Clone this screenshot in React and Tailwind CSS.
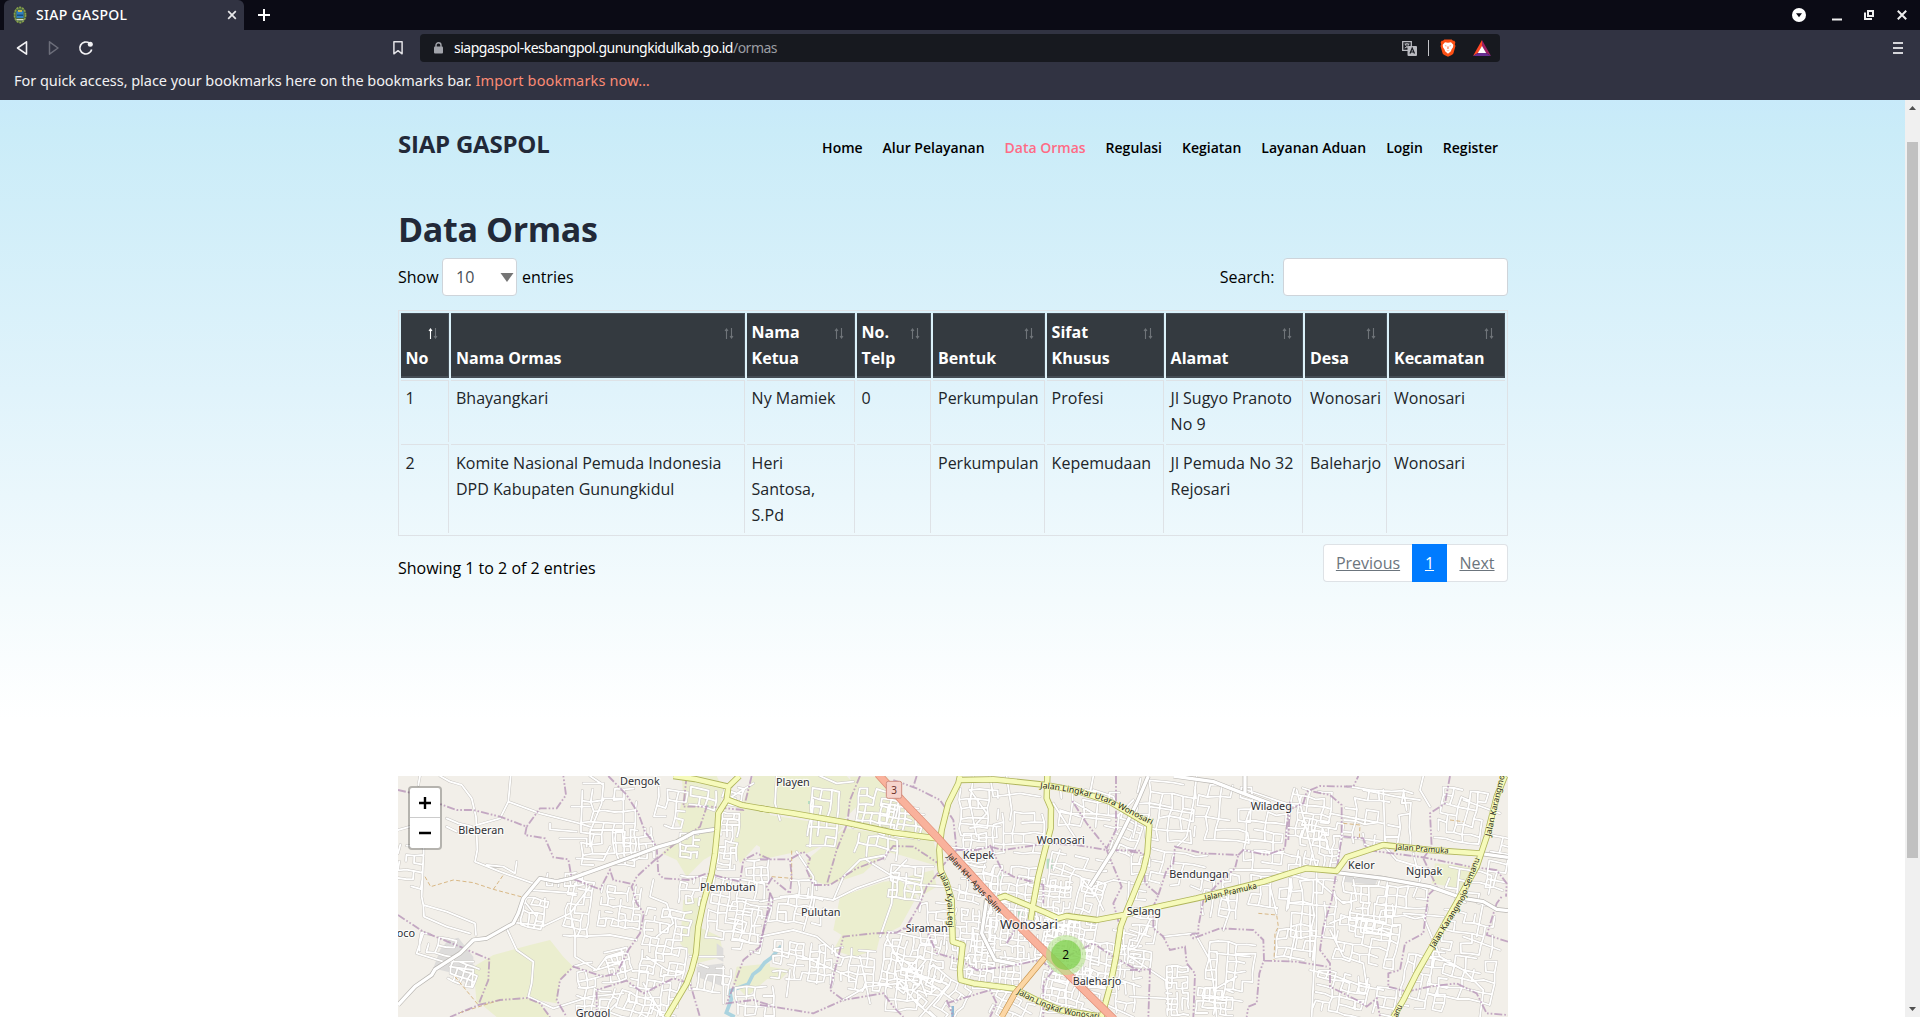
import React from 'react';

const NAV = ['Home', 'Alur Pelayanan', 'Data Ormas', 'Regulasi', 'Kegiatan', 'Layanan Aduan', 'Login', 'Register'];

const COLUMNS = [
  { label: 'No', width: 48 },
  { label: 'Nama Ormas', width: 294 },
  { label: 'Nama Ketua', width: 108 },
  { label: 'No. Telp', width: 74 },
  { label: 'Bentuk', width: 112 },
  { label: 'Sifat Khusus', width: 117 },
  { label: 'Alamat', width: 137 },
  { label: 'Desa', width: 82 },
  { label: 'Kecamatan', width: 116 },
];

const ROWS = [
  ['1', 'Bhayangkari', 'Ny Mamiek', '0', 'Perkumpulan', 'Profesi', 'Jl Sugyo Pranoto No 9', 'Wonosari', 'Wonosari'],
  ['2', 'Komite Nasional Pemuda Indonesia DPD Kabupaten Gunungkidul', 'Heri Santosa, S.Pd', '', 'Perkumpulan', 'Kepemudaan', 'Jl Pemuda No 32 Rejosari', 'Baleharjo', 'Wonosari'],
];

const CELL_PAD = ['pl-[4.600px]', 'pl-[5px]', 'pl-[4.600px]', 'pl-[4.600px]', 'pl-[5px]', 'pl-[4.600px]', 'pl-[4.600px]', 'pl-[5px]', 'pl-[5px]'];

/* ---------- browser chrome ---------- */

function Favicon() {
  return (
    <svg width="14" height="18" viewBox="0 0 14 18">
      <ellipse cx="7" cy="9" rx="6" ry="8" fill="#4d6b45" />
      <ellipse cx="7" cy="9" rx="5.6" ry="7.6" fill="none" stroke="#8aa04a" strokeWidth="1.6" strokeDasharray="2 1" />
      <rect x="3.5" y="5" width="7" height="7" fill="#2f7fc1" />
      <rect x="4" y="8.5" width="6" height="1.5" fill="#1b4c7d" />
      <path d="M5 4h4v2H5z" fill="#c9b44b" />
      <path d="M3.5 13h7v1.3h-7z" fill="#d6d9c4" />
    </svg>
  );
}

function TabStrip() {
  return (
    <div className="flex h-[30px] items-center bg-[#0b0b15] pl-1 text-white">
      <div className="flex h-[30px] w-[240px] items-center rounded-t-md bg-[#313342] pl-[9px] pr-[7px]">
        <Favicon />
        <span className="ml-[9px] pb-[2px] text-[14px] font-medium tracking-[0.3px]">SIAP GASPOL</span>
        <svg className="ml-auto" width="10" height="10" viewBox="0 0 10 10" stroke="#e8e8ea" strokeWidth="1.7">
          <path d="M1.2 1.2l7.6 7.6M8.8 1.2L1.2 8.8" />
        </svg>
      </div>
      <svg className="ml-[14px]" width="12" height="12" viewBox="0 0 12 12" stroke="#fff" strokeWidth="2">
        <path d="M6 0v12M0 6h12" />
      </svg>
      <div className="ml-auto flex items-center pr-[13px]">
        <svg width="14" height="14" viewBox="0 0 14 14">
          <circle cx="7" cy="7" r="7" fill="#fff" />
          <path d="M4 5.3h6L7 9.2z" fill="#0b0b15" />
        </svg>
        <svg className="ml-[26px]" width="10" height="12" viewBox="0 0 10 12">
          <rect y="9.5" width="10" height="2" fill="#eee" />
        </svg>
        <svg className="ml-[22px]" width="10" height="10" viewBox="0 0 10 10" fill="none" stroke="#eee" strokeWidth="2">
          <path d="M4 1h5v5H4z" />
          <path d="M1 2.5V9h7" />
        </svg>
        <svg className="ml-[23px]" width="10" height="10" viewBox="0 0 10 10" stroke="#eee" strokeWidth="2">
          <path d="M.8 .8l8.4 8.4M9.2 .8L.8 9.2" />
        </svg>
      </div>
    </div>
  );
}

function BraveIcon() {
  return (
    <svg width="16" height="18" viewBox="0 0 16 18">
      <path d="M4.3.4h7.4l1.3 1.4 1.4-.1 1 2-.6 1.6.7 1.6-2 7.2c-.3 1-1 1.500-1.800 2L8 17.800l-3.700-1.700c-.8-.5-1.500-1-1.800-2L.5 6.900l.7-1.600-.6-1.600 1-2 1.400.1z" fill="#fb4f14" />
      <path d="M5 3.200L8 3.700l3-.5 2.300 2.600-.3 2.400-1.500 2.400-.6 1.600L8 14.800l-2.900-2.600-.6-1.600L3 8.200l-.3-2.400z" fill="#fff" />
      <path d="M4.600 6.600l2 .2-.5.700zM11.400 6.600l-2 .2.5.7zM7.700 7.300h.6l.3 2.100L8 9.900l-.6-.5zM6.300 11.200L8 11.700l1.700-.5L8 12.300z" fill="#fb4f14" />
    </svg>
  );
}

function Toolbar() {
  return (
    <div className="flex h-9 items-center bg-[#313342]">
      <svg className="ml-4" width="62" height="16" viewBox="0 0 62 16" fill="none" strokeLinejoin="round">
        <path d="M10.500 1.800v12.400L1.500 8z" stroke="#f2f2f4" strokeWidth="1.600" />
        <path d="M33.500 1.800v12.400l8.500-6.200z" stroke="#6c6e7a" strokeWidth="1.500" />
      </svg>
      <svg width="16" height="16" viewBox="0 0 16 16" fill="none">
        <path d="M11.500 3.200A6 6 0 1 0 13.700 9.500" stroke="#f2f2f4" strokeWidth="1.700" />
        <circle cx="12.300" cy="4.300" r="2.500" fill="#f2f2f4" />
      </svg>
      <svg className="ml-[299px]" width="10" height="14" viewBox="0 0 10 14" fill="none" stroke="#e2e2e6" strokeWidth="1.500">
        <path d="M.9.8h8.200v12L5 9.700.9 12.800z" strokeLinejoin="round" />
      </svg>
      <div className="ml-[17px] flex h-7 w-[1080px] items-center rounded bg-[#17191f] pl-[14px] pr-[9px]">
        <svg width="9" height="12" viewBox="0 0 9 12">
          <rect y="4.500" width="9" height="7" rx="1" fill="#a2a4ab" />
          <path d="M2 5V3.200a2.500 2.500 0 0 1 5 0V5" fill="none" stroke="#a2a4ab" strokeWidth="1.400" />
        </svg>
        <span className="ml-[11px] pb-[2px] text-[14px] tracking-[-0.5px] text-white">
          siapgaspol-kesbangpol.gunungkidulkab.go.id<span className="text-[#9b9da3]">/ormas</span>
        </span>
        <svg className="ml-auto" width="15" height="15" viewBox="0 0 15 15">
          <path d="M.7.700h8.600v8.600H.7z" fill="none" stroke="#b9bac0" strokeWidth="1.300" />
          <path d="M2.500 3h5M5 2v1M3.500 3c0 2 2 3.500 3.500 4M6.500 3c0 2-2 3.500-3.800 4" stroke="#b9bac0" fill="none" />
          <rect x="5.500" y="5" width="9.500" height="10" rx="1" fill="#b9bac0" />
          <path d="M8 12.500L10.200 7l2.300 5.500M8.800 11h3" stroke="#17191f" strokeWidth="1.200" fill="none" />
        </svg>
        <div className="ml-[11px] h-4 w-px bg-[#c4c5c9]" />
        <div className="ml-[11px]"><BraveIcon /></div>
        <svg className="ml-[17px]" width="18" height="16" viewBox="0 0 18 16">
          <path d="M9 0L0 16l5-3 4-6.500z" fill="#ff4724" />
          <path d="M9 0l9 16-5-3-4-6.500z" fill="#9e1f63" />
          <path d="M0 16h18l-5-3H5z" fill="#662d91" />
          <path d="M9 6l4.200 7H4.800z" fill="#fff" />
        </svg>
      </div>
      <svg className="ml-auto mr-[17px]" width="10" height="13" viewBox="0 0 10 13" fill="#d4d5d9">
        <path d="M0 0h10v2H0zM0 5h10v2H0zM0 10h10v2H0z" />
      </svg>
    </div>
  );
}

function BookmarksBar() {
  return (
    <div className="flex h-[34px] items-start bg-[#313342] pl-[14px] pt-[4px] text-[14.500px] leading-[20px] text-[#f1f1f3]">
      <span className="whitespace-pre tracking-[-0.04px]">For quick access, place your bookmarks here on the bookmarks bar. </span>
      <span className="tracking-[0.15px] text-[#fb8a74]">Import bookmarks now…</span>
    </div>
  );
}

function Scrollbar() {
  return (
    <div className="flex w-[15px] shrink-0 flex-col items-center bg-[#f0f0f0]">
      <svg className="mt-1.5" width="7" height="4" viewBox="0 0 7 4"><path d="M0 4h7L3.500 0z" fill="#505050" /></svg>
      <div className="mt-8 h-[716px] w-[11px] bg-[#c1c1c1]" />
      <svg className="mb-1.5 mt-auto" width="7" height="4" viewBox="0 0 7 4"><path d="M0 0h7L3.500 4z" fill="#505050" /></svg>
    </div>
  );
}

/* ---------- data table ---------- */

function SortArrows({ active }) {
  return (
    <svg className="absolute right-[10px] top-[14px]" width="10" height="11" viewBox="0 0 10 11" fill="none">
      <path d="M2.500 11V1M1 3L2.500 1 4 3" stroke={active ? '#ffffff' : '#6f7479'} strokeWidth="1.100" />
      <path d="M7.500 0v10M6 8l1.500 2L9 8" stroke="#6f7479" strokeWidth="1.100" />
    </svg>
  );
}

function DataTable() {
  return (
    <table className="mt-[14px] w-[1110px] table-fixed border-separate border-spacing-[2px] border border-[#dee2e6] text-[16px] leading-[26px] text-[#212529]">
      <colgroup>
        {COLUMNS.map((c) => <col key={c.label} style={{ width: c.width }} />)}
      </colgroup>
      <thead>
        <tr className="h-[65px]">
          {COLUMNS.map((c, i) => (
            <th key={c.label} className={'relative border-b-2 border-r border-t border-[#454d55] bg-[#343a40] pb-[5px] pr-[30px] text-left align-bottom font-bold text-white ' + CELL_PAD[i]}>
              <span className="whitespace-pre">{c.label === 'Nama Ketua' || c.label === 'No. Telp' || c.label === 'Sifat Khusus' ? c.label.replace(/ (?=\w+$)/, '\n') : c.label}</span>
              <SortArrows active={i === 0} />
            </th>
          ))}
        </tr>
      </thead>
      <tbody>
        {ROWS.map((row, r) => (
          <tr key={row[0]} className={r === 0 ? 'h-[62px]' : 'h-[89px]'}>
            {row.map((cell, i) => (
              <td key={i} className={'border-t border-[#dee2e6] pb-0 align-top ' + CELL_PAD[i] + (i < 8 ? ' border-r' : '') + (i === 2 ? ' pr-[6px]' : ' pr-[4px]') + (r === 0 ? ' pt-[4px]' : ' pt-[5px]')}>{cell}</td>
            ))}
          </tr>
        ))}
      </tbody>
    </table>
  );
}

/* ---------- map ---------- */

function makeRandom(seed) {
  let s = seed;
  return () => {
    s = (s * 16807) % 2147483647;
    return s / 2147483647;
  };
}

/* Irregular village street grid: [x, y, width, height, angle, spacing] */
function streetGrid([x, y, w, h, angle, step], seed) {
  const rnd = makeRandom(seed * 7919 + 13);
  const a = (angle * Math.PI) / 180;
  const cols = Math.max(1, Math.round(w / step));
  const rows = Math.max(1, Math.round(h / step));
  const pts = [];
  for (let r = 0; r <= rows; r++) {
    pts.push([]);
    for (let c = 0; c <= cols; c++) {
      const dx = c * step - w / 2 + (rnd() - 0.5) * step * 0.3;
      const dy = r * step - h / 2 + (rnd() - 0.5) * step * 0.3;
      pts[r].push([Math.round(x + w / 2 + dx * Math.cos(a) - dy * Math.sin(a)), Math.round(y + h / 2 + dx * Math.sin(a) + dy * Math.cos(a))]);
    }
  }
  let d = '';
  for (let r = 0; r <= rows; r++) {
    for (let c = 0; c <= cols; c++) {
      if (c < cols && rnd() < 0.7) d += `M${pts[r][c]}L${pts[r][c + 1]}`;
      if (r < rows && rnd() < 0.7) d += `M${pts[r][c]}L${pts[r + 1][c]}`;
    }
  }
  return d;
}

const WEST = {
  fields: [
    'M250 590L310 555 420 525 480 510 520 560 550 590 510 630 500 700 440 690 400 682 300 705 260 700z',
    'M270 700L400 684 440 690 480 741H320z',
    'M875 18H980L1000 60 985 130 975 250 940 270 890 320 860 270 815 250 880 190 860 150 880 80z',
    'M1050 120L1090 18H1140V250L1100 225 1050 280 1030 230z',
    'M880 390L940 380 925 470 990 500 1000 560 920 580 870 520z',
    'M1040 590L1140 580V620L1070 680 1030 640z',
  ],
  built: ['M175 510L205 503 250 560 250 655 190 610 130 595 150 540z', 'M920 590L1000 580V650L920 620z', 'M980 520l20 15v40l-20-10z'],
  boundary: [
    'M24 60L60 68 130 95 200 120 250 120 330 140 410 170 450 115 500 115 528 75 520 18',
    'M410 170L405 195 465 205 490 262 535 268 545 325 630 358 660 300 670 330 740 345',
    'M655 18L710 75 745 130 765 185 800 230 805 310 820 325 900 330 950 310 1050 335 1060 270 1100 250 1140 268',
    'M800 265L740 320 725 350 740 400 762 430 750 490 715 540 680 610 640 620 550 590 510 630 500 690 530 741',
    'M24 435L100 485 210 530 298 568 295 630 265 705 180 741M265 705L330 690 410 684 450 700 480 741',
    'M620 741V660L710 632 760 670 800 650 850 625 900 640 930 741',
    'M1140 370L1130 440 1110 530 1060 570 1030 650 1010 700 1090 690 1140 705M800 268L850 225 930 170 950 110 880 110 890 18M1085 18L1060 120 960 110',
  ],
  tracks: ['M105 320L122 350 190 330 250 338 310 358 400 382M310 358L340 315', 'M195 620L265 705M210 728L330 690'],
  lanes: [
    'M150 18L180 35 215 45 245 85 258 140 262 240 255 275 330 305 430 340',
    'M362 18L355 95 330 145 260 165M355 95L450 130 560 158 600 170',
    'M100 260L95 380 100 405 170 425 255 460 258 495M100 405L102 440 170 470 240 490',
    'M290 285L340 290 375 310 380 275M170 145L205 160 245 170M170 170L200 185',
    'M350 475L380 540 430 575 425 640 415 680 490 715 600 680 700 670',
    'M375 458L460 468 540 430 600 350M555 340L540 420 555 490 555 560 620 600',
    'M600 18L640 45 635 100 600 185 600 230M640 85H700V180H600M580 40H640M545 110H600M480 160V178L560 185M510 205H590V230M560 265L640 270 660 230',
    'M400 390L440 440M465 385L460 470M420 360L560 370M560 500L660 495 740 510',
    'M620 600L650 560 700 545M770 560L830 600 880 610M100 490L80 550 160 575 250 575M180 590L250 600 245 650M60 170L24 180M90 18L85 45',
    'M790 330L780 380 830 400 850 460 800 500M760 640L820 741M680 700L640 741M1000 590V700M900 560H1000M1010 90L1090 40',
  ],
  grids: [
    [24, 230, 70, 130, 5, 24], [575, 60, 150, 210, 0, 32], [680, 180, 110, 90, -5, 22], [400, 385, 70, 80, 12, 22],
    [530, 330, 60, 160, 8, 24], [630, 350, 120, 120, 5, 20], [560, 570, 140, 60, -12, 24], [650, 540, 60, 60, -12, 17],
    [800, 60, 90, 110, 8, 28], [870, 190, 50, 80, 4, 18], [1000, 50, 60, 60, 15, 18], [990, 130, 50, 170, 5, 17],
    [760, 420, 140, 200, 8, 22], [870, 320, 70, 70, 5, 20], [960, 330, 160, 170, 8, 26], [1070, 270, 70, 70, 0, 22],
    [720, 610, 150, 120, 5, 24], [560, 660, 100, 80, 5, 24], [660, 680, 170, 60, 18, 24], [900, 590, 110, 80, 8, 24],
    [1010, 400, 110, 150, 12, 28], [470, 310, 100, 30, 0, 18], [90, 500, 110, 60, 12, 26], [1040, 650, 100, 80, 0, 28],
    [180, 580, 70, 60, 20, 20], [900, 60, 90, 50, 10, 26],
  ],
};

const CENTER = {
  fields: [
    'M0 18H260L300 60 290 110 250 150 100 130 0 110z',
    'M0 130L250 170 210 215 140 250 110 245 0 270z',
    'M255 175L520 210 540 290 420 255 380 245 310 310 250 330 200 345 150 330 140 270z',
    'M270 20H380L440 95 520 190 430 190 300 160z',
    'M240 380L370 335 420 330 470 380 420 470 360 500 350 540 280 560 220 540 245 495 220 480z',
    'M30 590L90 600 60 630 0 625V610z',
    'M425 325L520 300 530 350 480 380z',
  ],
  built: [],
  boundary: [
    'M0 268L90 268 95 320 90 370 35 325 20 350 40 390 20 440 5 500 0 520',
    'M95 265L130 245 150 265 140 300 160 345 210 345 290 295 370 265 400 228 460 230 520 270 550 290 500 350 480 400 440 470 410 488 340 490 250 500 235 560 210 660 250 690 370 670 400 710 430 741',
    'M300 18L270 90 262 160 230 240 200 345M400 30L470 55 540 90 580 150 590 240 545 290',
    'M590 240L650 240 690 230 730 240 830 225 860 220 950 225 1040 240 1140 242',
    'M1068 18V180L1040 235 980 160 935 90M690 225L725 300 760 320 850 345 850 400',
    'M1040 240L1085 350 1060 400 1080 470M430 475L500 480 530 550 600 570 650 600 740 590 840 570',
    'M840 570L880 600 850 640 850 741M560 700L690 660 710 700 690 741M0 705L70 715 160 730 250 690M920 560L1000 520 1060 560 1140 605M470 18L460 50M560 690L580 741M740 520L770 470 800 450',
  ],
  tracks: ['M95 330L95 240M35 320L95 325'],
  lanes: [
    'M50 18L45 100 60 150M180 18L230 40 280 35M0 395L110 375 160 380 220 390 290 355 390 320 480 345 560 350 640 375',
    'M160 90L150 230M110 245L160 320 155 390 130 480M220 390L250 320 300 270 380 255M400 320L395 400 360 500M440 270L400 310M320 270L400 320 480 330',
    'M640 18L630 100 650 200M740 18L755 120 750 150M690 18L700 80 780 70 840 80M630 60L680 130 650 160',
    'M1120 90L1070 140 1000 130 940 95M900 120L960 140 1050 150M1000 18L990 70M880 100L930 180 960 225',
    'M600 290L700 380 670 490 710 570 770 582 850 560M430 290L520 290M640 480L650 600M880 290L960 320 1010 380 1030 420',
    'M0 500L100 480 170 500 240 560M40 540L130 560 200 590 290 630M90 600L80 680M180 540L170 640M300 560L330 700M400 550L470 600 500 680M250 690L320 650 420 640 470 700 520 741',
    'M380 500L430 600 560 640M480 741L560 650M960 560L1060 590 1140 560M1050 620L1140 650M1030 700L1120 741M640 590L620 640M870 600L840 741M900 240L880 300M1120 340L1060 330 1000 350',
    'M1060 480L1140 500M1070 540L1140 530M1000 60L1060 80 1068 100M600 160L720 170M560 230L640 240',
  ],
  grids: [
    [150, 60, 90, 160, 5, 28], [290, 60, 120, 130, 8, 24], [360, 110, 130, 90, 8, 18], [600, 60, 100, 150, 0, 28],
    [700, 130, 140, 110, 0, 30], [610, 190, 60, 90, 0, 22], [600, 290, 120, 120, 10, 22], [580, 420, 120, 180, 5, 18],
    [670, 400, 140, 170, 5, 18], [800, 330, 120, 150, 5, 16], [860, 440, 150, 110, 8, 16], [830, 450, 130, 130, 5, 18],
    [950, 330, 80, 120, 15, 24], [30, 380, 160, 80, 5, 26], [40, 520, 170, 110, 5, 22], [220, 540, 160, 130, 5, 24],
    [370, 500, 180, 150, 10, 20], [390, 290, 100, 90, 5, 24], [480, 400, 90, 110, 0, 24], [620, 560, 150, 90, 5, 20],
    [430, 600, 180, 110, 35, 24], [860, 590, 170, 140, 15, 20], [970, 520, 110, 140, 5, 22], [1070, 480, 70, 150, 0, 24],
    [850, 560, 70, 160, 5, 24], [700, 680, 120, 60, 25, 24], [900, 60, 180, 90, 5, 36], [870, 260, 180, 100, 10, 34],
    [1070, 130, 60, 110, 20, 24], [90, 330, 90, 60, 5, 26], [670, 290, 160, 110, 5, 26], [1040, 640, 90, 90, 0, 28],
    [380, 600, 90, 110, 0, 30], [290, 200, 120, 70, 10, 30],
  ],
};

const EAST = {
  fields: ['M915 280L1025 290 1010 365 960 350 905 340z'],
  built: ['M640 315L745 325 735 345 640 335z'],
  boundary: [
    'M0 245L40 250 45 340 85 375 70 410 70 475 100 500 120 540 165 530 170 580 195 610 190 741',
    'M85 375L110 300 130 280 135 230 220 250 325 255 315 295 260 345 220 390 205 470 205 490 180 492 190 505 270 475 370 480 400 510 402 570 388 610 380 700 355 710 350 741',
    'M325 255L340 240 410 255 465 235 475 120 520 100 530 65 570 48 670 50 685 18M550 65L600 75 635 105 635 200 620 300 605 390 580 470 570 540 600 580 600 650 680 690 710 710 740 685 750 741',
    'M402 572L500 575 590 590M640 200L700 205 710 240 880 262 1020 290 1100 300 1130 340 1128 380',
    'M960 18L945 100 900 130 905 230 880 265M880 265L920 350 895 375 880 490 825 520 810 600 775 610 775 650 830 665 900 650 980 640 1040 670 1070 730 1134 735M1134 515L1070 495 1100 400 1115 380',
    'M0 600L60 598 55 741M480 95L475 210',
  ],
  tracks: ['M640 160L690 165 688 205M960 150L1000 155M385 430L440 435 445 470 435 490 432 570'],
  lanes: [
    'M190 130L60 110M200 18L190 100 170 200 140 230M350 60L450 95 500 110M600 130L700 150 760 160M500 60L530 180 560 300',
    'M560 300L560 450 550 640 545 741M640 200L760 215M700 60L800 80 870 90M760 60L765 215M760 225L800 270 900 300M580 180L600 250',
    'M100 500L190 490M195 490L240 570 250 640 260 741M260 550L360 560M320 620L250 660M480 400L620 410M500 470L480 570M540 410L540 560',
    'M600 460L650 440 800 470M600 480L640 560 700 580 710 650M700 480L780 500 770 560M820 430L940 440M880 440L930 560 1000 600M1000 600L1060 660 1050 741M930 560L870 560M940 570L1000 600 1050 610',
    'M1060 395L1040 500M980 390L970 440M1000 500L1110 540M540 600L620 620 700 650 760 660M0 480L60 500M0 560L120 640M60 450L20 530 0 540M0 680L110 685M110 600L115 720',
    'M900 110L870 60 880 18M1000 90L1110 130M850 250L870 330 850 380M560 330L640 400 680 390 670 330M480 330L470 420M280 350L300 420 280 480M420 350L440 430M820 60L830 120M300 300L420 300 540 330',
  ],
  grids: [
    [20, 40, 180, 170, 6, 34], [200, 50, 170, 170, 5, 32], [350, 130, 120, 110, 5, 28], [480, 60, 130, 150, 8, 24],
    [510, 150, 110, 140, 8, 20], [640, 60, 220, 160, 5, 34], [930, 60, 140, 150, 10, 26], [1080, 200, 50, 150, 10, 26],
    [340, 250, 180, 60, 5, 28], [220, 310, 110, 140, 5, 26], [360, 320, 130, 100, 5, 30], [480, 330, 130, 160, 0, 34],
    [660, 400, 130, 90, 5, 18], [620, 450, 180, 130, 10, 26], [640, 320, 120, 90, 5, 26], [770, 350, 120, 90, 5, 30],
    [110, 590, 70, 140, 0, 16], [200, 660, 110, 70, 5, 18], [230, 520, 140, 180, 5, 28], [0, 420, 70, 170, 8, 24],
    [440, 480, 110, 90, 5, 28], [820, 560, 120, 150, 10, 26], [940, 430, 150, 110, 8, 30], [560, 610, 140, 110, 10, 24],
    [900, 560, 200, 140, 10, 32], [680, 650, 120, 80, 10, 28], [0, 260, 60, 130, 5, 26], [950, 300, 120, 110, 10, 32],
    [60, 250, 160, 110, 8, 32],
  ],
};

/* Boxes read left to right across the map viewport */
const REGIONS = [
  { key: 'west', shift: 'translate(-24 -18)', data: WEST },
  { key: 'center', shift: 'translate(1086 -18)', data: CENTER },
  { key: 'east', shift: 'translate(2196 -18)', data: EAST },
];

const TERTIARY = [
  ['translate(-24 -18)', 'M24 705L75 650 125 615 135 598 210 550 250 510 290 505 370 460 385 430 400 385 450 325 500 335 545 325 740 255 800 232 860 215 910 188 975 178'],
  ['translate(1086 -18)', 'M1165 18L1130 100 1060 240 990 350M680 390L665 490 705 570 765 582'],
  ['translate(2196 -18)', 'M130 18L250 35 340 70 420 100M345 18V70M620 308L760 325 900 350 1000 385 1060 395 1100 418 1134 422M1048 250L1134 262'],
];

const SECONDARY = [
  ['translate(-24 -18)', 'M1048 18L1015 50 1010 90 985 130 982 180 975 250 965 310 940 400 925 470 918 550 905 600 890 640 830 741M850 18L915 27 1015 50M1010 88L1055 105 1140 120'],
  ['translate(1086 -18)', 'M0 115L100 130 260 158 400 188 530 205M600 18L595 40 565 100 545 180 538 240 542 300 560 340 575 390 578 515 608 525 600 600 602 630 640 640 760 655 830 690 900 720 1010 738M600 30L700 28 860 45 960 65 1050 95 1168 165 1162 250 1150 300 1105 410 1082 470 1068 560 1050 650 1025 741M862 18L860 85 873 115 872 175 855 240 835 320 820 400 812 450M715 385L735 378 850 425 895 445 920 438 1010 450 1105 432'],
  ['translate(2196 -18)', 'M-8 432L75 412 200 385 400 335 480 310 530 295 620 303 650 262 760 225 900 240 1048 250M1125 18L1100 80 1070 200 1040 290 990 380 900 540 860 610 820 690 790 741'],
];

const PLACES = [
  [181, 174, 'Bleberan'], [666, 27, 'Dengok'], [906, 345, 'Plembutan'], [-4, 482, 'oco'], [533, 723, 'Grogol'],
  [1134, 29, 'Playen'], [1916, 204, 'Wonosari'], [1694, 248, 'Kepek'], [1209, 420, 'Pulutan'], [1523, 469, 'Siraman'],
  [2024, 626, 'Baleharjo'], [2186, 418, 'Selang'], [2558, 101, 'Wiladeg'], [2314, 305, 'Bendungan'], [2850, 279, 'Kelor'], [3024, 296, 'Ngipak'],
];

const STREET_NAMES = [
  ['n1', 'M1646 242L1900 522', 'Jalan KH. Agus Salim', 230],
  ['n2', 'M1622 296Q1644 330 1648 370L1650 470', 'Jalan Kyai Legi', 164],
  ['n3', 'M1926 36Q2080 52 2160 95T2290 160', 'Jalan Lingkar Utara Wonosari', 355],
  ['n4', 'M1856 652Q1920 690 1980 708T2130 730', 'Jalan Lingkar Wonosari', 262],
  ['n5', 'M2422 374L2620 327', 'Jalan Pramuka', 160],
  ['n6', 'M2992 221L3170 234', 'Jalan Pramuka', 160],
  ['n7', 'M3278 182L3315 20 3340 -80', 'Jalan Karangmojo', 210],
  ['n8', 'M3108 518L3200 370 3260 210', 'Jalan Karangmojo-Semanu', 304],
  ['n9', 'M2990 745L3025 665', 'manu', 60],
];

function MapCanvas() {
  return (
    <svg className="block" width="1110" height="241" viewBox="0 0 3330 723" fontFamily="'Noto Sans', 'Open Sans', sans-serif">
      <rect width="3330" height="723" fill="#f2efe9" />
      {REGIONS.map(({ key, shift, data }) => (
        <g key={key} transform={shift}>
          {data.fields.map((d) => <path key={d} d={d} fill="#ebeecf" />)}
          {data.built.map((d) => <path key={d} d={d} fill="#dddcdb" />)}
        </g>
      ))}
      <g fill="#b5dfc2">
        <path d="M1946 248h18v30h-18zM1860 400h14v22h-14zM1805 300h10v10h-10zM1230 75h9v9h-9zM920 88h12v6h-12z" />
      </g>
      <path d="M1010 723L985 710 1000 670 995 645 1050 625 1065 595 1085 580 1100 560 1120 545 1150 510" fill="none" stroke="#aad3df" strokeWidth="11" />
      <path d="M1664 690V723" stroke="#8fb9d6" strokeWidth="8" />
      <g fill="none" strokeLinecap="round" strokeLinejoin="round">
        {REGIONS.map(({ key, shift, data }) => {
          const d = data.lanes.join('') + data.grids.map((g, i) => streetGrid(g, i + key.length * 31)).join('');
          return (
            <g key={key} transform={shift}>
              <path d={d} stroke="#c8c5c1" strokeWidth="8.500" />
              <path d={d} stroke="#ffffff" strokeWidth="5.500" />
            </g>
          );
        })}
      </g>
      <g fill="none">
        {REGIONS.map(({ key, shift, data }) => (
          <g key={key} transform={shift}>
            <path d={data.tracks.join('')} stroke="#d2ac71" strokeWidth="2.500" strokeDasharray="12 7" />
            <path d={data.boundary.join('')} stroke="#b795b8" strokeOpacity="0.8" strokeWidth="5.500" strokeDasharray="24 6 5 6 5 6" />
          </g>
        ))}
      </g>
      <g fill="none" strokeLinejoin="round">
        {TERTIARY.map(([t, d]) => <path key={d} transform={t} d={d} stroke="#b9b6b2" strokeWidth="14" />)}
        {TERTIARY.map(([t, d]) => <path key={d} transform={t} d={d} stroke="#ffffff" strokeWidth="10" />)}
        {SECONDARY.map(([t, d]) => <path key={d} transform={t} d={d} stroke="#b0b55c" strokeWidth="19" />)}
        {SECONDARY.map(([t, d]) => <path key={d} transform={t} d={d} stroke="#f6fabb" strokeWidth="14" />)}
        <path d="M1811 723L1851 652 1944 540" stroke="#c9964f" strokeWidth="18" />
        <path d="M1811 723L1851 652 1944 540" stroke="#fcd6a4" strokeWidth="14" />
        <path d="M1440 -6L1511 72 1616 182 1806 392 1916 502 2148 730" stroke="#dc8a73" strokeWidth="24" />
        <path d="M1440 -6L1511 72 1616 182 1806 392 1916 502 2148 730" stroke="#f9b29c" strokeWidth="20" />
      </g>

      <rect x="1465" y="16" width="46" height="51" rx="6" fill="#f6d3cc" stroke="#cf8f82" strokeWidth="3" />
      <text x="1488" y="53" fontSize="30" textAnchor="middle" fill="#6b2f28">3</text>

      <g fill="#27271a" fontSize="25">
        {STREET_NAMES.map(([id, d, name, length]) => (
          <React.Fragment key={id}>
            <path id={id} d={d} fill="none" />
            <text stroke="#f6fabb" strokeWidth={id === 'n1' ? 0 : 3} paintOrder="stroke">
              <textPath href={`#${id}`} textLength={length} lengthAdjust="spacingAndGlyphs">{name}</textPath>
            </text>
          </React.Fragment>
        ))}
      </g>
      <g fill="#2e2e33" stroke="#ffffff" strokeOpacity="0.75" strokeWidth="7" paintOrder="stroke" strokeLinejoin="round">
        {PLACES.map(([x, y, name]) => <text key={name} x={x} y={y} fontSize="32.500">{name}</text>)}
        <text x="1806" y="458" fontSize="39">Wonosari</text>
      </g>

      <circle cx="2004" cy="537" r="60" fill="#b5e28c" fillOpacity="0.6" />
      <circle cx="2004" cy="537" r="45" fill="#6ecc39" fillOpacity="0.6" />
      <text x="2003" y="549" fontSize="36" textAnchor="middle" fill="#000" fontFamily="'Open Sans', sans-serif">2</text>
    </svg>
  );
}

function MapPanel() {
  return (
    <div className="relative mt-[194px] h-[241px] w-[1110px] overflow-hidden bg-[#f2efe9]">
      <MapCanvas />
      <div className="absolute left-[10px] top-[10px] flex h-[64px] w-[34px] flex-col overflow-hidden rounded border-2 border-black/25 bg-white bg-clip-padding">
        <button className="flex h-[30px] items-center justify-center border-b border-[#ccc]">
          <svg width="12" height="12" viewBox="0 0 12 12" stroke="#000" strokeWidth="2.400"><path d="M6 0v12M0 6h12" /></svg>
        </button>
        <button className="flex h-[30px] items-center justify-center">
          <svg width="12" height="12" viewBox="0 0 12 12" stroke="#000" strokeWidth="2.400"><path d="M0 6h12" /></svg>
        </button>
      </div>
    </div>
  );
}

export default function App() {
  return (
    <div className="flex h-[1017px] w-[1920px] flex-col overflow-hidden font-['Noto_Sans','Open_Sans',sans-serif]">
      <TabStrip />
      <Toolbar />
      <BookmarksBar />
      <div className="flex min-h-0 flex-1 font-['Open_Sans','Noto_Sans',sans-serif]">
        <main className="flex-1 overflow-hidden bg-white bg-[linear-gradient(180deg,#c8eafa_0px,#caecf8_30px,#e0f3fb_290px,#f4fbfd_500px,#ffffff_620px)] pl-[398px] text-black">
          <header className="flex h-[96px] w-[1110px] items-center justify-between">
            <div className="pb-[8px] text-[24px] font-bold leading-[30px] tracking-[-0.22px] text-[#222938]">SIAP GASPOL</div>
            <nav className="flex gap-5 pr-[10px] text-[14px] font-semibold leading-[20px]">
              {NAV.map((n) => <a key={n} className={n === 'Data Ormas' ? 'text-[#ff6b85]' : ''}>{n}</a>)}
            </nav>
          </header>
          <h1 className="mt-[12px] h-[50px] text-[34px] font-bold leading-[42px] tracking-[-0.36px] text-[#222938]">Data Ormas</h1>
          <div className="flex h-[38px] w-[1110px] items-center justify-between text-[16px]">
            <div className="flex items-center">
              <span className="w-[40px]">Show</span>
              <div className="ml-1 mr-[5px] flex h-[38px] w-[75px] items-center justify-between rounded border border-[#ced4da] bg-white pl-[13px] pr-[2px] text-[#495057]">
                10
                <svg width="14" height="9" viewBox="0 0 13 9"><path d="M0 0h13L6.500 9z" fill="#757575" /></svg>
              </div>
              entries
            </div>
            <div className="flex items-center">
              Search:
              <div className="ml-[8.500px] h-[38px] w-[225px] rounded border border-[#ced4da] bg-white" />
            </div>
          </div>
          <DataTable />
          <div className="mt-2 flex h-[38px] w-[1110px] justify-between text-[16px]">
            <div className="pt-[11px] leading-[26px]">Showing 1 to 2 of 2 entries</div>
            <div className="flex leading-[36px] text-[#6c757d]">
              <div className="w-[89px] rounded-l border border-r-0 border-[#dee2e6] bg-white text-center underline">Previous</div>
              <div className="w-[35px] border border-[#007bff] bg-[#007bff] text-center text-white underline">1</div>
              <div className="w-[61px] rounded-r border border-l-0 border-[#dee2e6] bg-white text-center underline">Next</div>
            </div>
          </div>
          <MapPanel />
        </main>
        <Scrollbar />
      </div>
    </div>
  );
}
